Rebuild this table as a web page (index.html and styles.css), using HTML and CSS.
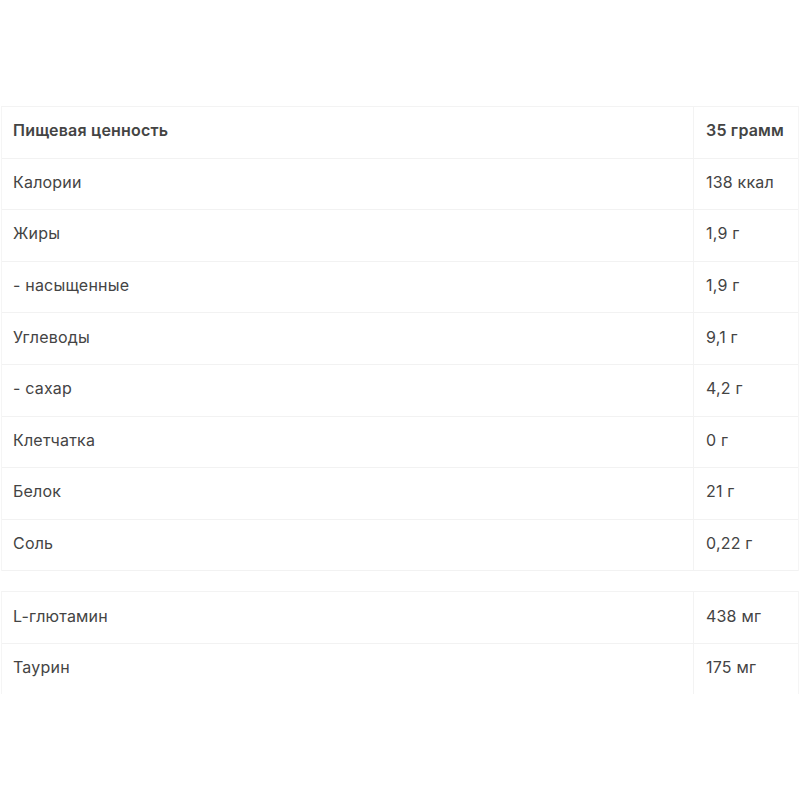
FILE: index.html
```html
<!DOCTYPE html>
<html lang="ru">
<head>
<meta charset="utf-8">
<link rel="stylesheet" href="styles.css">
</head>
<body>
<div class="page">
  <div class="table">
    <div class="row head"><div class="name">Пищевая ценность</div><div class="val">35 грамм</div></div>
    <div class="row"><div class="name">Калории</div><div class="val">138 ккал</div></div>
    <div class="row"><div class="name">Жиры</div><div class="val">1,9 г</div></div>
    <div class="row"><div class="name">- насыщенные</div><div class="val">1,9 г</div></div>
    <div class="row"><div class="name">Углеводы</div><div class="val">9,1 г</div></div>
    <div class="row"><div class="name">- сахар</div><div class="val">4,2 г</div></div>
    <div class="row"><div class="name">Клетчатка</div><div class="val">0 г</div></div>
    <div class="row"><div class="name">Белок</div><div class="val">21 г</div></div>
    <div class="row"><div class="name">Соль</div><div class="val">0,22 г</div></div>
  </div>
  <div class="table second">
    <div class="row"><div class="name">L-глютамин</div><div class="val">438 мг</div></div>
    <div class="row last"><div class="name">Таурин</div><div class="val">175 мг</div></div>
  </div>
</div>
</body>
</html>
```
FILE: styles.css
```css
html, body {
  margin: 0;
  padding: 0;
  background: #ffffff;
}
body {
  font-family: Inter, "Noto Sans", sans-serif;
  font-size: 16px;
  letter-spacing: 0.2px;
  color: #444444;
}
.page {
  padding-top: 106px;
  padding-left: 1px;
  width: 798px;
}
.table {
  border-top: 1px solid #f3f3f3;
  border-left: 1px solid #f5f5f5;
  border-right: 1px solid #f5f5f5;
}
.second {
  margin-top: 20px;
}
.row {
  display: grid;
  grid-template-columns: 692px 1fr;
  height: 51.6px;
  box-sizing: border-box;
  border-bottom: 1px solid #f2f2f2;
}
.row.last {
  border-bottom: none;
  height: 50px;
}
.name, .val {
  display: flex;
  align-items: center;
  padding-bottom: 4px;
}
.name {
  padding-left: 11px;
  border-right: 1px solid #f3f3f3;
}
.val {
  padding-left: 12px;
}
.head {
  font-weight: 600;
}
```
